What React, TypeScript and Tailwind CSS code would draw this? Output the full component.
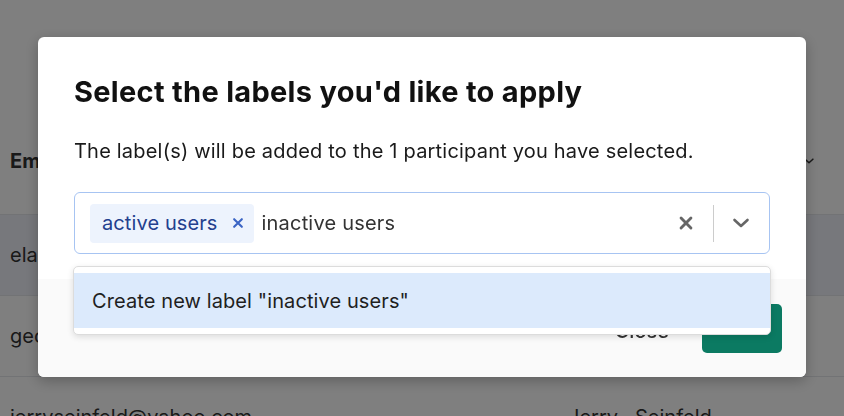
import React from 'react';

const font = { fontFamily: 'Inter, "Noto Sans", sans-serif' };

const rows = [
    { email: 'elainebenes@gmail.com', first: 'Elaine', last: 'Benes', selected: true },
    { email: 'georgecostanza@aol.com', first: 'George', last: 'Costanza', selected: false },
    { email: 'jerryseinfeld@yahoo.com', first: 'Jerry', last: 'Seinfeld', selected: false },
];

const XIcon = ({ className }: { className?: string }) => (
    <svg viewBox="0 0 20 20" className={className} fill="none" stroke="currentColor" strokeLinecap="round">
        <path d="M4.5 4.5l11 11M15.5 4.5l-11 11" />
    </svg>
);

const Chevron = ({ className }: { className?: string }) => (
    <svg viewBox="0 0 20 20" className={className} fill="none" stroke="currentColor" strokeWidth={2.6} strokeLinecap="round" strokeLinejoin="round">
        <path d="M3.5 7l6.5 6 6.5-6" />
    </svg>
);

export default function App() {
    return (
        <div className="relative w-[844px] h-[416px] overflow-hidden bg-white text-[#333]" style={font}>
            {/* Page underneath */}
            <div className="pt-[107px]">
                <div className="h-[108px] flex items-center px-[10px] border-b border-[#e4e6eb] text-[20px] font-bold text-[#333]">
                    <span className="w-[558px] shrink-0">Email</span>
                    <span className="w-[67px] shrink-0">First</span>
                    <span className="w-[168px] shrink-0">Last name</span>
                    <Chevron className="w-3 h-3 text-[#333]" />
                </div>
                {rows.map((r) => (
                    <div
                        key={r.email}
                        className={`h-[81px] flex items-center px-[10px] border-b border-[#e4e6eb] text-[20px] text-[#333] ${r.selected ? 'bg-[#eff1f8]' : 'bg-white'}`}
                    >
                        <span className="w-[558px] shrink-0">{r.email}</span>
                        <span className="w-[67px] shrink-0">{r.first}</span>
                        <span>{r.last}</span>
                    </div>
                ))}
            </div>

            {/* Overlay + modal */}
            <div className="fixed inset-0 bg-black/50 flex justify-center pt-[37px]">
                <div className="w-[768px] h-[340px] bg-white rounded-md flex flex-col shadow-[0_4px_14px_rgba(0,0,0,0.25)]">
                    <div className="px-9 pt-[38px] pb-[25px]">
                        <h2 className="text-[29px] leading-[34px] font-bold text-[#111] tracking-[0.3px]">
                            Select the labels you'd like to apply
                        </h2>
                        <p className="mt-[28px] text-[20px] leading-[28px] text-[#1a1a1a] tracking-[0.2px]">
                            The label(s) will be added to the 1 participant you have selected.
                        </p>

                        <div className="relative mt-[27px]">
                            <div className="h-[62px] flex items-center border border-[#a7c4f2] rounded-md pl-[15px] pr-[18px]">
                                <div className="flex-1 flex items-center gap-2">
                                    <div className="h-[39px] flex items-center gap-[13px] bg-[#edf3fd] rounded-[4px] pl-[12px] pr-[9px]">
                                        <span className="text-[20px] text-[#23408e] tracking-[0.1px]">active users</span>
                                        <XIcon className="w-[14px] h-[14px] text-[#3a64c4] [stroke-width:3]" />
                                    </div>
                                    <span className="text-[20px] text-[#333] tracking-[0.2px]">inactive users</span>
                                </div>
                                <XIcon className="w-[18px] h-[18px] text-[#666] [stroke-width:3.2]" />
                                <div className="w-px h-[37px] bg-[#cccccc] ml-[18px] mr-[17px]" />
                                <Chevron className="w-[20px] h-[20px] text-[#666]" />
                            </div>

                            <div className="absolute -left-px -right-px top-[74px] z-10 bg-white border border-[#dcdcdc] rounded-[5px] py-[6px] shadow-[0_2px_6px_rgba(0,0,0,0.12)]">
                                <div className="h-[55px] flex items-center px-[18px] bg-[#dceafc] text-[20px] text-[#1f1f1f] tracking-[0.1px]">
                                    Create new label "inactive users"
                                </div>
                            </div>
                        </div>
                    </div>

                    <div className="flex-1 bg-[#fafafa] rounded-b-md flex items-center justify-end gap-[33px] px-6">
                        <button className="text-[20px] leading-[26px] font-medium text-[#333] mt-[6px]">Close</button>
                        <button className="w-[80px] h-[49px] rounded-[5px] bg-[#0b7a62] text-white text-[20px] font-bold">
                            Add
                        </button>
                    </div>
                </div>
            </div>
        </div>
    );
}
